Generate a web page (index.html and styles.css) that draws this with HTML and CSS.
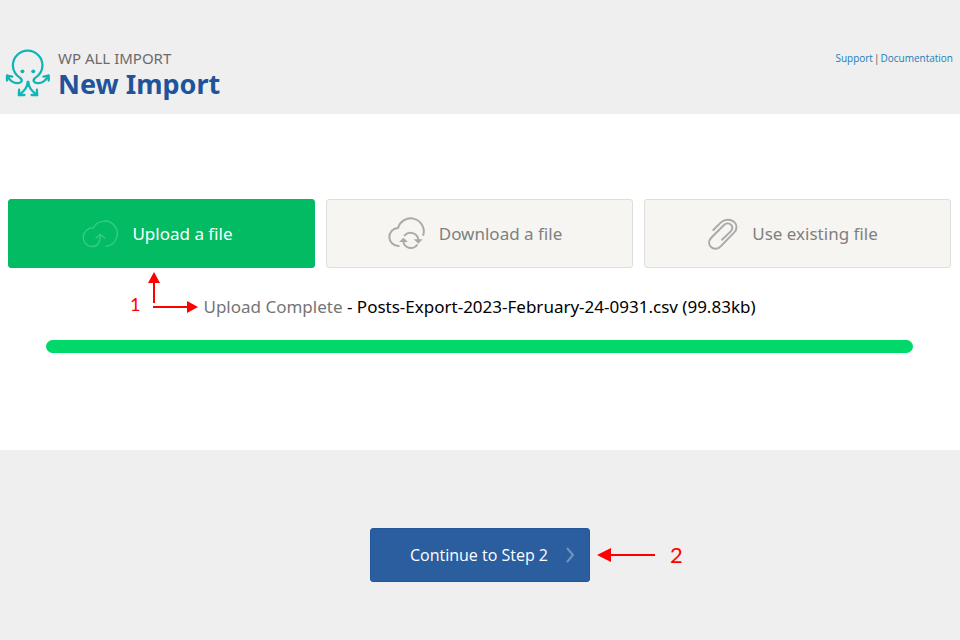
FILE: index.html
```html
<!DOCTYPE html>
<html lang="en">
<head>
    <meta charset="UTF-8">
    <meta name="viewport" content="width=device-width, initial-scale=1.0">
    <title>New Import</title>
    <link rel="stylesheet" href="styles.css">
</head>
<body>
<header class="header">
    <div class="brand">
        <svg class="logo" viewBox="15 10 140 150" aria-hidden="true">
            <path d="M22 93 C28 108 42 117 54 116 C66 115 70 106 61 100 C47 90 39 78 39 62 A45 45 0 0 1 129 62 C129 78 121 90 107 100 C98 106 102 115 114 116 C126 117 141 108 147 93"/>
            <path d="M21 108 L21 93 L37 96 M148 108 L148 93 L132 96"/>
            <path d="M84 112 C84 130 72 140 58 152 M86 112 C86 130 98 140 112 152"/>
            <path d="M58 136 L57 152 L74 152 M112 136 L113 152 L96 152"/>
            <circle cx="68" cy="80" r="6"/>
            <circle cx="101" cy="80" r="6"/>
        </svg>
        <div>
            <p class="product">WP ALL IMPORT</p>
            <h1 class="title">New Import</h1>
        </div>
    </div>
    <nav class="links">
        <a href="#support">Support</a>
        <span>|</span>
        <a href="#docs">Documentation</a>
    </nav>
</header>

<main class="main">
    <div class="sources">
        <button type="button" class="source selected">
            <svg class="icon-upload" viewBox="246 84 111 84" aria-hidden="true">
                <path d="M320 163 A38 38 0 1 0 283 108 A28 28 0 1 0 278 164 C294 164 304 153 304 128"/>
                <path d="M291 138 L304 127 L317 138"/>
            </svg>
            Upload a file
        </button>
        <button type="button" class="source">
            <svg class="icon-download" viewBox="204 82 111 96" aria-hidden="true">
                <path d="M236 166 A27 27 0 1 1 234 112 A39 39 0 0 1 310 133"/>
                <path d="M254 134 A24 24 0 0 1 295 146 M291 163 A23 23 0 0 1 250 153"/>
                <path class="head" d="M281 146 H308 L295 159 Z M237 154 H264 L250 141 Z"/>
            </svg>
            Download a file
        </button>
        <button type="button" class="source">
            <svg class="icon-clip" viewBox="208 82 90 96" aria-hidden="true">
                <path d="M224 118 L246 96 C257 85 275 84 286 93 C296 103 296 116 286 126 L246 167 C238 176 224 176 217 169 C209 161 210 150 217 142 L256 103 C262 97 271 97 277 102 C282 108 282 116 276 122 L250 147"/>
            </svg>
            Use existing file
        </button>
    </div>

    <div class="status">
        <p class="status-text"><label for="upload">Upload Complete</label> - Posts-Export-2023-February-24-0931.csv (99.83kb)</p>
        <div class="step-one">
            <span class="number">1</span>
            <svg class="arrows" viewBox="0 0 46 42" aria-hidden="true">
                <path d="M2 31 V8 M1 35 H36"/>
                <path class="head" d="M-4 11 L2 0 L8 11 Z M35 29 L46 35 L35 41 Z"/>
            </svg>
        </div>
    </div>
    <progress class="progress" id="upload" value="100" max="100"></progress>
</main>

<footer class="footer">
    <div class="next">
        <button type="button" class="continue">
            Continue to Step 2
            <svg class="chevron" viewBox="0 0 10 16" aria-hidden="true"><path d="M2 1 L8 8 L2 15"/></svg>
        </button>
        <div class="step-two">
            <svg class="arrow" viewBox="0 0 58 14" aria-hidden="true">
                <path d="M12 7 H58"/>
                <path class="head" d="M0 7 L14 0 V14 Z"/>
            </svg>
            <span class="number-big">2</span>
        </div>
    </div>
</footer>
</body>
</html>
```
FILE: styles.css
```css
* {
    box-sizing: border-box;
}

body {
    font-family: "Noto Sans", "Open Sans", sans-serif;
    margin: 0;
    min-height: 100vh;
    background-color: #efefef;
    color: #000;
}

svg {
    fill: none;
    flex: none;
    overflow: visible;
}

button {
    font-family: inherit;
    cursor: pointer;
}

.header {
    display: flex;
    justify-content: space-between;
    padding: 48px 7px 14px 5px;
}

.brand {
    display: flex;
    gap: 7px;
}

.logo {
    width: 46px;
    height: 50px;
    stroke: #10b5b5;
    stroke-width: 7;
    stroke-linecap: round;
    stroke-linejoin: round;
}

.logo circle {
    fill: #10b5b5;
    stroke: none;
}

.product {
    margin: 0;
    font-size: 15px;
    line-height: 20px;
    color: #6b6b6b;
}

.title {
    margin: 0;
    font-size: 27px;
    line-height: 32px;
    color: #1f549b;
}

.links {
    display: flex;
    gap: 1px;
    font-family: "Open Sans", sans-serif;
    font-size: 10px;
    line-height: 20px;
    color: #555;
}

.links a {
    color: #1a7dbb;
    text-decoration: none;
}

.main {
    background-color: #fff;
    padding: 85px 9px 97px 8px;
}

.sources {
    display: grid;
    grid-template-columns: repeat(3, 1fr);
    gap: 11px;
}

.source {
    display: flex;
    align-items: center;
    justify-content: center;
    gap: 14px;
    height: 69px;
    padding: 0 9px 0 0;
    border: 1px solid #dededc;
    border-radius: 3px;
    background-color: #f6f5f1;
    color: #808080;
    font-size: 17px;
}

.source svg {
    stroke: #aaa;
    stroke-width: 6;
    stroke-linecap: round;
}

.source .head {
    fill: #aaa;
    stroke: none;
}

.source.selected {
    background-color: #03bb63;
    border-color: #03bb63;
    color: #fff;
}

.source.selected svg {
    stroke: #35cd88;
    stroke-width: 4;
}

.icon-upload {
    width: 37px;
    height: 28px;
}

.icon-download {
    width: 37px;
    height: 32px;
}

.icon-clip {
    width: 30px;
    height: 32px;
}

.status {
    position: relative;
    width: fit-content;
    margin: 27px auto 21px;
}

.status-text {
    margin: 0;
    font-size: 17px;
    line-height: 24px;
}

.status-text label {
    color: #757575;
}

/* red step markers sit over the page */
.step-one,
.step-two {
    position: absolute;
    display: flex;
    color: #f00;
    font-family: Lato, sans-serif;
}

.step-one {
    right: 100%;
    top: -23px;
    gap: 12px;
    align-items: flex-end;
    padding-right: 5px;
}

.step-two {
    left: 100%;
    top: 0;
    bottom: 0;
    align-items: center;
    gap: 15px;
    padding-left: 7px;
}

.number {
    font-size: 18px;
    line-height: 20px;
}

.number-big {
    font-size: 22px;
    line-height: 24px;
}

.arrows,
.arrow {
    stroke: #f00;
    stroke-width: 2;
}

.arrows {
    width: 46px;
    height: 42px;
}

.arrow {
    width: 58px;
    height: 14px;
}

.arrows .head,
.arrow .head {
    fill: #f00;
    stroke: none;
}

.progress {
    display: block;
    width: calc(100% - 76px);
    height: 13px;
    margin: 0 auto;
    appearance: none;
    border: none;
    border-radius: 7px;
    overflow: hidden;
}

.progress::-webkit-progress-bar {
    background-color: #eee;
}

.progress::-webkit-progress-value {
    background-color: #00d96a;
}

.footer {
    padding: 78px 0 58px;
}

.next {
    position: relative;
    width: 220px;
    margin: 0 auto;
}

.continue {
    display: flex;
    align-items: center;
    justify-content: flex-end;
    gap: 17px;
    width: 100%;
    height: 54px;
    padding: 0 14px;
    border: 1px solid #23569a;
    border-radius: 3px;
    background-color: #2b5e9f;
    color: #fff;
    font-family: "Open Sans", sans-serif;
    font-size: 16px;
}

.chevron {
    width: 10px;
    height: 16px;
    stroke: #7093c0;
    stroke-width: 2;
}
```
